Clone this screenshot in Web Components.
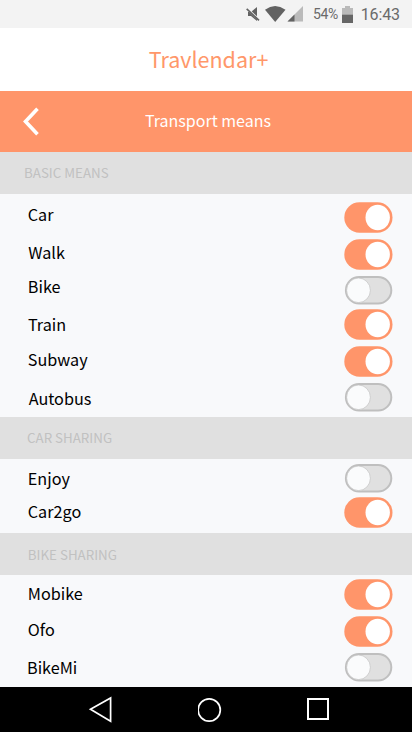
<!DOCTYPE html>
<html lang="en">
<head>
<meta charset="utf-8">
<title>Travlendar+</title>
<style>
body{margin:0;width:412px;height:732px;overflow:hidden;background:#f8f9fb;font-family:"Noto Sans CJK SC","Noto Sans",sans-serif;color:#000}
</style>
</head>
<body>
<travel-screen></travel-screen>
<script>
function define(name, html, setup) {
  customElements.define(name, class extends HTMLElement {
    connectedCallback() {
      if (this.shadowRoot) return;
      this.attachShadow({mode: 'open'}).innerHTML = html;
      if (setup) setup(this, this.shadowRoot);
    }
  });
}

define('status-bar', `<style>
:host{display:flex;height:28px;box-sizing:border-box;background:#f3f3f3;color:#6a6a6a;font-family:Roboto,sans-serif;justify-content:flex-end;align-items:center;padding-right:12px}
svg{display:block;margin-right:8px}
.pct{font-size:14px;letter-spacing:-.4px;width:29px;white-space:nowrap}
.bat{margin-right:8px}
.time{font-size:16px;letter-spacing:-.1px;width:39px;white-space:nowrap;display:flex;justify-content:flex-end;padding-top:1px}
</style>
<svg width="59" height="18" viewBox="0 0 59 18">
<path d="M2 7h3l6-5v14l-6-5H2z" fill="#626262"/><path d="M0 2.300l13 12.500" stroke="#f3f3f3" stroke-width="2.200"/><path d="M.7 3.800l12.300 11.500" stroke="#626262" stroke-width="1.600"/>
<path d="M19 4.700Q29 -2.500 39.500 4.700L29.200 17z" fill="#626262"/>
<path d="M57 1v15.500H41.500z" fill="#bababa"/><path d="M48.500 9.500v7h-7z" fill="#626262"/>
</svg>
<span class="pct">54%</span>
<svg class="bat" width="11" height="17" viewBox="0 0 11 17"><path d="M0 2h3V0h5v2h3v7H0z" fill="#bababa"/><path d="M0 8.700h11V17H0z" fill="#666"/></svg>
<span class="time">16:43</span>`);

define('app-title', `<style>
:host{display:flex;height:63px;background:#fff;color:#ff976a;font-size:21.500px;line-height:61px;justify-content:center;padding-left:5px}
</style><span><slot></slot></span>`);

define('nav-header', `<style>
:host{display:grid;grid-template-columns:50px 1fr 50px;height:61px;background:#ff956a;color:#fff;align-items:center;font-size:16px;line-height:24px;text-align:center}
svg{display:block;margin-left:22px}
span{padding:0 0 3px 4px}
</style>
<svg width="20" height="30" viewBox="0 0 20 30"><path d="M15.500 1.700L3.500 14.500l12 12.800" fill="none" stroke="#fff" stroke-width="3.600"/></svg>
<span><slot></slot></span>`);

define('toggle-switch', `<style>
:host{display:block;width:49px;height:31px}
svg{display:block}
.off{display:none}
:host([off]) .on{display:none}
:host([off]) .off{display:block}
</style>
<svg class="on" width="49" height="31" viewBox="0 0 49 31"><rect x=".3" y=".3" width="48.200" height="30.400" rx="15.200" fill="#ff956a"/><ellipse cx="33.700" cy="15.500" rx="12.200" ry="12.800" fill="#fff"/></svg>
<svg class="off" width="49" height="31" viewBox="0 0 49 31"><rect x="1.900" y="2" width="45.400" height="26.500" rx="13.250" fill="#e0e0e0" stroke="#bfbfbf" stroke-width="2"/><ellipse cx="14.500" cy="15.300" rx="11.900" ry="12.300" fill="#fafbfc" stroke="#c0c0c0" stroke-width=".7"/></svg>`);

define('transport-row', `<style>
:host{display:flex;justify-content:space-between;align-items:flex-start;padding-right:19px;box-sizing:border-box}
.label{font-size:16.200px;line-height:24px;white-space:nowrap}
</style><span class="label"><slot></slot></span><toggle-switch></toggle-switch>`, (el, root) => {
  el.style.height = el.getAttribute('h') + 'px';
  const label = root.querySelector('.label');
  label.style.marginTop = el.getAttribute('drop') + 'px';
  label.style.marginLeft = (el.getAttribute('inset') || 27.8) + 'px';
  root.querySelector('toggle-switch').toggleAttribute('off', el.hasAttribute('off'));
});

define('means-section', `<style>
:host{display:block}
header{height:42px;background:#e0e0e0;color:#c1c1c1;font-size:13.350px;line-height:42px;white-space:nowrap}
</style><header></header><div><slot></slot></div>`, (el, root) => {
  const h = root.querySelector('header');
  h.textContent = el.getAttribute('heading');
  h.style.paddingLeft = el.getAttribute('inset') + 'px';
  if (el.hasAttribute('line')) h.style.lineHeight = el.getAttribute('line') + 'px';
  root.querySelector('div').style.paddingTop = el.getAttribute('gap') + 'px';
});

define('system-nav', `<style>
:host{display:flex;height:45px;background:#000;align-items:center;justify-content:space-between;padding:0 83px 0 88px}
svg{display:block}
</style>
<svg width="24" height="28" viewBox="0 0 24 28"><path d="M2.500 13.300L22.600 2v23.200z" fill="none" stroke="#fff" stroke-width="1.700"/></svg>
<svg width="24" height="26" viewBox="0 0 24 26"><circle cx="11.200" cy="13" r="11.100" fill="none" stroke="#fff" stroke-width="1.700"/></svg>
<svg width="22" height="23" viewBox="0 0 22 23"><path d="M1 1h20v20H1z" fill="none" stroke="#fff" stroke-width="2"/></svg>`);

define('travel-screen', `<style>:host{display:flex;flex-direction:column;width:412px;height:732px}</style>
<status-bar></status-bar>
<app-title>Travlendar+</app-title>
<nav-header>Transport means</nav-header>
<means-section heading="BASIC MEANS" inset="24" gap="8">
<transport-row h="37" drop="0">Car</transport-row>
<transport-row h="36" drop="1" inset="28.300">Walk</transport-row>
<transport-row h="34" drop="-1" off>Bike</transport-row>
<transport-row h="37" drop="3" inset="28">Train</transport-row>
<transport-row h="36" drop="1">Subway</transport-row>
<transport-row h="35" drop="4" inset="28.700" off>Autobus</transport-row>
</means-section>
<means-section heading="CAR SHARING" inset="27" gap="4">
<transport-row h="34" drop="3" off>Enjoy</transport-row>
<transport-row h="36" drop="2">Car2go</transport-row>
</means-section>
<means-section heading="BIKE SHARING" inset="27.800" gap="4" line="44">
<transport-row h="37" drop="2">Mobike</transport-row>
<transport-row h="36" drop="1">Ofo</transport-row>
<transport-row h="35" drop="3" inset="27" off>BikeMi</transport-row>
</means-section>
<system-nav></system-nav>`);
</script>
</body>
</html>
